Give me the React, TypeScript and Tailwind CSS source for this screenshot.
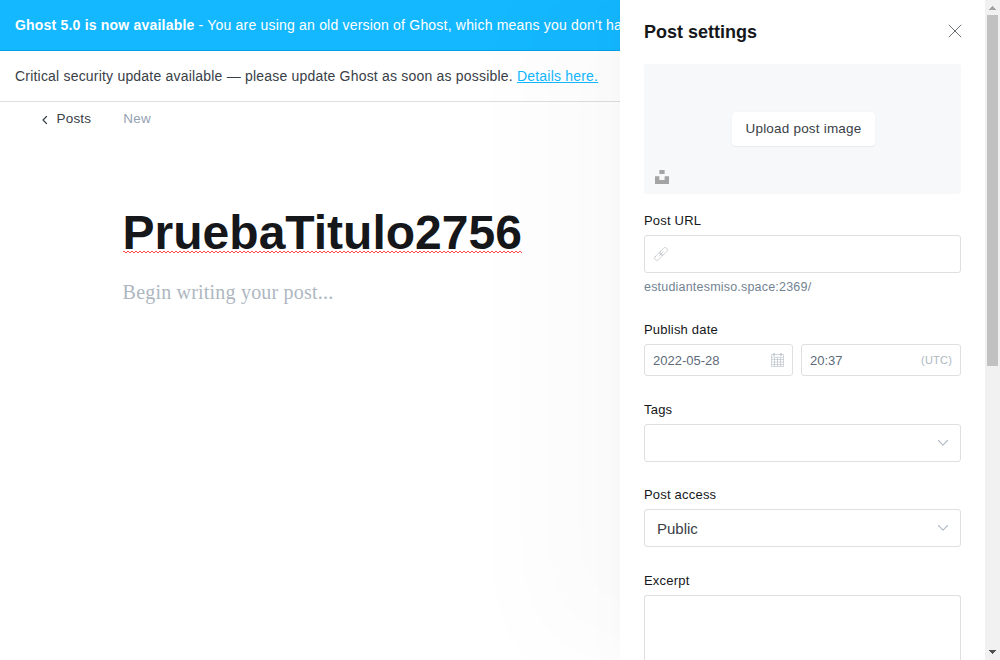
import type { ReactNode } from "react";

function CloseIcon() {
  return (
    <svg width="14" height="14" viewBox="0 0 14 14" fill="none" stroke="#394047" strokeWidth="0.75">
      <path d="M.8.8l12.4 12.4M13.2.8L.8 13.2" />
    </svg>
  );
}

function UnsplashIcon() {
  return (
    <svg width="14" height="14" viewBox="0 0 32 32" fill="#a4a4a5">
      <path d="M10 9V0h12v9H10zm12 5h10v18H0V14h10v9h12v-9z" />
    </svg>
  );
}

function LinkIcon() {
  return (
    <svg width="14" height="14" viewBox="0 0 14 14" fill="none" stroke="#b4b9be" strokeWidth="0.6" strokeLinecap="round" strokeLinejoin="round">
      <g transform="rotate(-45 7 7)">
        <rect x="-1" y="4.700" width="8.600" height="4.600" rx="2" />
        <rect x="6.400" y="4.700" width="8.600" height="4.600" rx="2" />
        <path d="M4 7h6" />
      </g>
    </svg>
  );
}

function CalendarIcon() {
  return (
    <svg width="13" height="14" viewBox="0 0 13 14" fill="none" stroke="#b4bcc5" strokeWidth="0.6">
      <path d="M.5 1.500h12v12H.5zM.5 4.300h12" />
      <path d="M.5 6.500h12M.5 9h12M.5 11.500h12M3.500 4.300v9.200M6.500 4.300v9.200M9.500 4.300v9.200" />
      <path d="M3 0v3M10 0v3" strokeWidth="1.200" />
    </svg>
  );
}

function ChevronDown() {
  return (
    <svg width="10" height="6" viewBox="0 0 10 6" fill="none" stroke="#b3bcc6" strokeWidth="1.100" strokeLinecap="round" strokeLinejoin="round">
      <path d="M.5.5L5 5.200 9.500.5" />
    </svg>
  );
}

function Label({ children }: { children: ReactNode }) {
  return <div className="h-[15px] text-[13px] leading-[15px] tracking-[0.2px] text-[#15171a]">{children}</div>;
}

const field = "flex items-center rounded-[3px] border border-[#dddfe0] bg-white";

function Editor() {
  return (
    <div className="w-[620px] shrink-0 overflow-hidden">
      <div className="h-[51px] overflow-hidden border-b border-[#00a0e6] bg-[#14b8ff] pl-[15px] text-[14px] leading-[50px] tracking-[0.2px] whitespace-nowrap text-white">
        <strong className="font-bold">Ghost 5.0 is now available</strong> - You are using an old version of Ghost, which means you don't ha
      </div>
      <div className="h-[51px] border-b border-[#dddedf] pl-[15px] text-[14px] leading-[50px] tracking-[0.2px] whitespace-nowrap text-[#394047]">
        Critical security update available — please update Ghost as soon as possible. <a className="text-[#14b8ff] underline">Details here.</a>
      </div>
      <div className="flex h-[34px] items-center pl-[41px] text-[13.500px] tracking-[0.2px]">
        <svg width="7" height="10" viewBox="0 0 7 10" fill="none" stroke="#394047" strokeWidth="1.200" strokeLinecap="round" strokeLinejoin="round" className="mt-px">
          <path d="M5.500 1.500L2 5 5.500 8.500" />
        </svg>
        <span className="ml-[8.500px] text-[#394047]">Posts</span>
        <span className="ml-[32px] text-[#95a1b1]">New</span>
      </div>
      <div className="pt-[69px] pl-[122.600px]">
        <h1 className="relative w-fit text-[48px] leading-[56px] font-bold text-[#15171a]">
          PruebaTitulo2756
          <svg className="absolute top-[45px] left-0" width="399" height="4">
            <defs>
              <pattern id="squiggle" width="4" height="4" patternUnits="userSpaceOnUse">
                <path d="M-1 3L1 1l2 2 2-2" fill="none" stroke="#ff3333" strokeWidth="0.900" />
              </pattern>
            </defs>
            <rect width="399" height="4" fill="url(#squiggle)" />
          </svg>
        </h1>
        <p className="mt-[16px] font-['Liberation_Serif',serif] text-[20px] leading-[30px] tracking-[0.2px] text-[#aeb7c1]">Begin writing your post...</p>
      </div>
    </div>
  );
}

function Settings() {
  return (
    <div className="relative h-[660px] w-[365px] shrink-0 bg-white px-[24px] shadow-[-85px_-8px_100px_rgba(0,0,0,0.02),-22px_0_12px_rgba(0,0,0,0.006),-2px_0_4px_rgba(0,0,0,0.006)]">
      <div className="flex h-[64px] items-center justify-between">
        <h2 className="text-[18px] leading-[22px] font-bold text-[#15171a]">Post settings</h2>
        <div className="-mr-px mb-[3px]"><CloseIcon /></div>
      </div>
      <div className="relative flex h-[130px] items-center justify-center rounded-[3px] bg-[#f7f8fa]">
        <button className="ml-[2px] h-[34px] w-[143px] rounded-[3px] bg-white text-[13.500px] tracking-[0.2px] text-[#394047] shadow-[0_0_1px_rgba(0,0,0,0.1),0_1px_1px_rgba(0,0,0,0.05)]">Upload post image</button>
        <div className="absolute bottom-[10px] left-[11px]"><UnsplashIcon /></div>
      </div>
      <div className="mt-[19px]">
        <Label>Post URL</Label>
        <div className={`${field} mt-[7px] h-[38px] pl-[9px]`}><LinkIcon /></div>
        <p className="mt-[7px] h-[15px] text-[12.500px] leading-[15px] tracking-[0.2px] text-[#738393]">estudiantesmiso.space:2369/</p>
      </div>
      <div className="mt-[27px]">
        <Label>Publish date</Label>
        <div className="mt-[7px] flex gap-2 text-[13px] text-[#5d6b7a]">
          <div className={`${field} h-[32px] w-[149px] justify-between px-[8px]`}><span className="pt-[2px]">2022-05-28</span><CalendarIcon /></div>
          <div className={`${field} h-[32px] w-[160px] justify-between px-[8px]`}><span className="pt-[2px]">20:37</span><span className="text-[11px] tracking-[0.2px] text-[#aeb7c1]">(UTC)</span></div>
        </div>
      </div>
      <div className="mt-[26px]">
        <Label>Tags</Label>
        <div className={`${field} mt-[7px] h-[38px] justify-end pr-[12px]`}><ChevronDown /></div>
      </div>
      <div className="mt-[25px]">
        <Label>Post access</Label>
        <div className={`${field} mt-[7px] h-[38px] justify-between pr-[12px] pl-[12px] text-[15px] text-[#394047]`}><span className="pt-[2px]">Public</span><ChevronDown /></div>
      </div>
      <div className="mt-[26px]">
        <Label>Excerpt</Label>
        <div className="mt-[7px] h-[65px] rounded-t-[3px] border border-b-0 border-[#dddfe0]" />
      </div>
    </div>
  );
}

function Scrollbar() {
  return (
    <div className="relative z-10 flex h-[660px] w-[15px] shrink-0 flex-col items-center bg-[#f1f1f1]">
      <svg width="15" height="15" viewBox="0 0 15 15" shapeRendering="crispEdges"><path d="M4 10h7L7.500 6z" fill="#a3a3a3" /></svg>
      <div className="h-[351px] w-[11px] bg-[#c1c1c1]" />
      <svg className="mt-auto" width="15" height="15" viewBox="0 0 15 15" shapeRendering="crispEdges"><path d="M4 5h7L7.500 9z" fill="#505050" /></svg>
    </div>
  );
}

export default function App() {
  return (
    <div className="flex h-[660px] w-[1000px] overflow-hidden bg-white font-['Liberation_Sans',Arial,sans-serif]">
      <Editor />
      <Settings />
      <Scrollbar />
    </div>
  );
}
